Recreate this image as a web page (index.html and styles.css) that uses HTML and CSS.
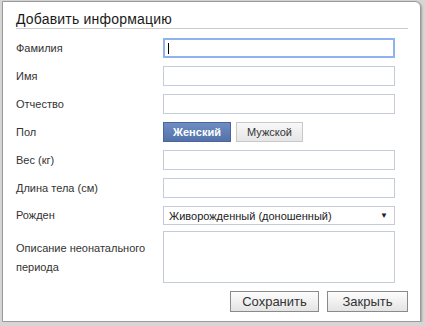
FILE: index.html
```html
<!DOCTYPE html>
<html lang="ru">
<head>
    <meta charset="UTF-8">
    <title>Добавить информацию</title>
    <link rel="stylesheet" href="styles.css">
</head>
<body>
<div class="dialog">
    <h1 class="dialog-title">Добавить информацию</h1>
    <form class="form">
        <label class="form-label" for="lastName">Фамилия</label>
        <div class="field">
            <input type="text" id="lastName" class="input focused">
            <span class="caret"></span>
        </div>

        <label class="form-label" for="firstName">Имя</label>
        <input type="text" id="firstName" class="input">

        <label class="form-label" for="middleName">Отчество</label>
        <input type="text" id="middleName" class="input">

        <span class="form-label">Пол</span>
        <div class="toggle">
            <button type="button" class="toggle-btn active">Женский</button>
            <button type="button" class="toggle-btn">Мужской</button>
        </div>

        <label class="form-label" for="weight">Вес (кг)</label>
        <input type="text" id="weight" class="input">

        <label class="form-label" for="length">Длина тела (см)</label>
        <input type="text" id="length" class="input">

        <label class="form-label" for="born">Рожден</label>
        <div class="select" id="born">
            <span>Живорожденный (доношенный)</span>
            <span class="arrow">&#9660;</span>
        </div>

        <label class="form-label" for="neonatal">Описание неонатального<br>периода</label>
        <textarea id="neonatal" class="textarea"></textarea>
    </form>
    <div class="dialog-buttons">
        <button type="button" class="btn btn-save">Сохранить</button>
        <button type="button" class="btn btn-close">Закрыть</button>
    </div>
</div>
</body>
</html>
```

FILE: styles.css
```css
body {
    margin: 0;
    background-color: #d6d6d6;
    font-family: "Liberation Sans", Arial, sans-serif;
    color: #333;
}

.dialog {
    box-sizing: border-box;
    width: 419px;
    height: 321px;
    margin: 1px 0 0 2px;
    padding: 0 12px 0 13px;
    background-color: #fff;
    border: 1px solid #9a9a9a;
    border-radius: 0 6px 0 0;
    box-shadow: 1px 1px 2px rgba(0, 0, 0, 0.25);
}

.dialog-title {
    margin: 0;
    padding-top: 8px;
    height: 18px;
    line-height: 18px;
    font-size: 14px;
    font-weight: normal;
    color: #1a1a1a;
    letter-spacing: 0.2px;
    border-bottom: 1px solid #ccc;
}

.form {
    display: grid;
    grid-template-columns: 147px 232px;
    row-gap: 8px;
    align-items: center;
    margin-top: 9px;
}

.form-label {
    font-size: 11px;
    line-height: 19px;
    color: #333;
}

.field {
    position: relative;
    height: 20px;
}

.input, .textarea, .select {
    display: block;
    box-sizing: border-box;
    width: 232px;
    height: 20px;
    margin: 0;
    padding: 0 4px;
    border: 1px solid #c3ccd8;
    background-color: #fff;
    font-family: inherit;
    font-size: 11px;
    color: #222;
}

.input.focused {
    border: 2px solid #8fb3ee;
    outline: none;
}

.caret {
    position: absolute;
    left: 5px;
    top: 5px;
    width: 1px;
    height: 11px;
    background-color: #000;
}

.toggle {
    display: flex;
    gap: 5px;
    height: 20px;
}

.toggle-btn {
    height: 20px;
    width: 67px;
    padding: 0;
    border: 1px solid #c8c8c8;
    background: linear-gradient(#f8f8f8, #e6e6e6);
    font-family: inherit;
    font-size: 11px;
    color: #333;
    cursor: pointer;
}

.toggle-btn.active {
    width: 68px;
    border-color: #4a659a;
    background: linear-gradient(#6f8dc2, #5272aa);
    color: #fff;
    font-weight: bold;
}

.select {
    display: flex;
    align-items: center;
    justify-content: space-between;
    padding: 0 6px 0 5px;
    height: 19px;
}

.arrow {
    font-size: 8px;
    color: #222;
}

.textarea {
    height: 52px;
    resize: none;
    margin-top: -2px;
}

.dialog-buttons {
    display: flex;
    justify-content: flex-end;
    gap: 8px;
    margin-top: 8px;
}

.btn {
    height: 21px;
    padding: 0;
    border: 1px solid #8a8a8a;
    background: linear-gradient(#fdfdfd, #e4e4e4);
    font-family: inherit;
    font-size: 13px;
    color: #333;
    cursor: pointer;
}

.btn-save {
    width: 89px;
}

.btn-close {
    width: 81px;
}
```
